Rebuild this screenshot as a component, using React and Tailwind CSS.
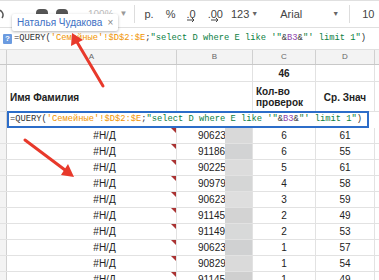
const rows = [
  ["90623", "6", "61"],
  ["91186", "6", "55"],
  ["90225", "5", "61"],
  ["90979", "4", "58"],
  ["90623", "3", "59"],
  ["91145", "2", "49"],
  ["91149", "2", "53"],
  ["90623", "1", "57"],
  ["90829", "1", "54"],
  ["91145", "1", "49"],
];

const blur = ["#d9d9d9", "#d2d3d4", "#dcdcdc", "#d5d6d6", "#dedede", "#d3d3d3", "#d8d9d9", "#d0d1d2", "#dadada", "#cfcfcf"];

function Formula() {
  return (
    <span className="whitespace-nowrap" style={{ fontFamily: "'Liberation Mono', 'DejaVu Sans Mono', monospace" }}>
      <span className="text-[#333]">=QUERY(</span>
      <span className="text-[#f09300]">'Семейные'!$D$2:$E</span>
      <span className="text-[#333]">;</span>
      <span className="text-[#0b8043]">"select D where E like '"</span>
      <span className="text-[#333]">&amp;</span>
      <span className="text-[#8e44ad]">B3</span>
      <span className="text-[#333]">&amp;</span>
      <span className="text-[#0b8043]">"' limit 1"</span>
      <span className="text-[#333]">)</span>
    </span>
  );
}

function App() {
  return (
    <div className="relative w-[379px] h-[280px] overflow-hidden bg-white" style={{ fontFamily: "'Liberation Sans', Arial, sans-serif" }}>
      {/* toolbar */}
      <div className="h-[28px] flex items-center border-t border-b border-[#e0e0e0] text-[11px] text-[#444] bg-white">
        <svg width="6" height="12" viewBox="0 0 6 12" className="ml-[-2px]"><path d="M0 2 A5 5 0 0 1 4 10" stroke="#555" strokeWidth="1.5" fill="none" /></svg>
        <div className="ml-[32px] w-[12px] h-[10px] bg-[#555] rounded-sm" />
        <div className="ml-[8px] w-[12px] h-[10px] bg-[#555] rounded-sm" />
        <span className="ml-[20px] text-[#bbb] text-[10px]">100%</span>
        <span className="ml-[6px] text-[#999] text-[8px]">▼</span>
        <div className="ml-[6px] w-px h-[18px] bg-[#ddd]" />
        <span className="ml-[10px]">р.</span>
        <span className="ml-[12px]">%</span>
        <span className="ml-[11px] relative">
          .0
          <svg className="absolute left-[1px] top-[12px]" width="8" height="4" viewBox="0 0 8 4"><path d="M0 2 H7 M5 0 L7 2 L5 4" stroke="#444" strokeWidth="1" fill="none" /></svg>
        </span>
        <span className="ml-[12px] relative">
          .00
          <svg className="absolute left-[3px] top-[12px]" width="8" height="4" viewBox="0 0 8 4"><path d="M0 2 H7 M5 0 L7 2 L5 4" stroke="#444" strokeWidth="1" fill="none" /></svg>
        </span>
        <span className="ml-[8px]">123</span>
        <span className="ml-[2px] text-[7px] text-[#666]">▼</span>
        <span className="ml-[22px]">Arial</span>
        <span className="ml-[30px] text-[7px] text-[#666]">▼</span>
        <div className="ml-[10px] w-px h-[18px] bg-[#ddd]" />
        <span className="ml-[12px]">10</span>
      </div>

      {/* formula bar */}
      <div className="h-[22px] flex items-center border-b border-[#e0e0e0] text-[8.75px]">
        <div className="ml-[3px] w-[9px] h-[10px] bg-[#6b9be0] rounded-[1px] text-white text-[8px] font-bold flex items-center justify-center">?</div>
        <div className="ml-[2px]"><Formula /></div>
      </div>

      {/* column headers */}
      <div className="h-[15px] flex bg-[#f3f3f3] border-b border-[#c8c8c8] text-[8px] text-[#666]">
        <div className="w-[7px] border-r border-[#d0d0d0]" />
        <div className="w-[170px] border-r border-[#d0d0d0] flex items-center justify-center">A</div>
        <div className="w-[76px] border-r border-[#d0d0d0] flex items-center justify-center">B</div>
        <div className="w-[63px] border-r border-[#d0d0d0] flex items-center justify-center">C</div>
        <div className="w-[59px] border-r border-[#d0d0d0] flex items-center justify-center">D</div>
        <div className="flex-1" />
      </div>

      <div className="text-[10px] text-[#222]">
        {/* row 1 */}
        <div className="h-[17px] flex border-b border-[#e2e2e2]">
          <div className="w-[7px] bg-[#f3f3f3] border-r border-[#d0d0d0]" />
          <div className="w-[170px] border-r border-[#e2e2e2]" />
          <div className="w-[76px] border-r border-[#e2e2e2]" />
          <div className="w-[63px] border-r border-[#e2e2e2] flex items-center justify-center font-bold">46</div>
          <div className="w-[59px] border-r border-[#e2e2e2]" />
        </div>
        {/* row 2 */}
        <div className="h-[30px] flex border-b border-[#e2e2e2] font-bold">
          <div className="w-[7px] bg-[#f3f3f3] border-r border-[#d0d0d0]" />
          <div className="w-[170px] border-r border-[#e2e2e2] flex items-center pl-[3px] pt-[2px]">Имя Фамилия</div>
          <div className="w-[76px] border-r border-[#e2e2e2]" />
          <div className="w-[63px] border-r border-[#e2e2e2] flex items-center pl-[3px] leading-[11px]">Кол-во<br />проверок</div>
          <div className="w-[59px] border-r border-[#e2e2e2] flex items-center justify-center pt-[2px]">Ср. Знач</div>
        </div>
        {/* row 3 with editor */}
        <div className="h-[16px] flex">
          <div className="w-[7px] bg-[#f3f3f3] border-r border-[#d0d0d0]" />
          <div className="w-[362px] h-[17px] mt-[-1px] border-2 border-[#2c6dc9] bg-white flex items-center pl-[1px] text-[8.75px] overflow-hidden">
            <Formula />
          </div>
        </div>
        {rows.map((r, i) => (
          <div key={i} className="h-[16px] flex border-b border-[#e2e2e2]">
            <div className="w-[7px] bg-[#f3f3f3] border-r border-[#d0d0d0]" />
            <div className="relative w-[170px] border-r border-[#e2e2e2] flex items-center justify-center pl-[26px]">
              #Н/Д
              <div className="absolute right-0 top-0 w-0 h-0 border-t-[5px] border-l-[5px] border-t-[#a33] border-l-transparent" />
            </div>
            <div className="w-[76px] border-r border-[#e2e2e2] flex items-center pl-[21px] overflow-hidden">
              <span className="w-[27px] overflow-hidden">{r[0]}</span>
              <div className="w-[28px] h-full" style={{ backgroundColor: blur[i] }} />
            </div>
            <div className="w-[63px] border-r border-[#e2e2e2] flex items-center justify-center">{r[1]}</div>
            <div className="w-[59px] border-r border-[#e2e2e2] flex items-center justify-center">{r[2]}</div>
          </div>
        ))}
      </div>

      {/* collaborator tooltip */}
      <div className="absolute left-[12px] top-[14px] h-[17px] px-[5px] bg-white shadow-[0_1px_3px_rgba(0,0,0,0.3)] rounded-[2px] flex items-center gap-[5px] text-[10px] text-[#3c6fc4] whitespace-nowrap">
        Наталья Чудакова
        <span className="text-[#888] text-[10px]">×</span>
      </div>

      {/* arrows */}
      <svg className="absolute inset-0 pointer-events-none" width="379" height="280">
        <line x1="103" y1="86" x2="77" y2="42" stroke="#e8392b" strokeWidth="3" strokeLinecap="round" />
        <polygon points="72,33 71,46 83,40" fill="#e8392b" />
        <line x1="25" y1="140" x2="65" y2="170" stroke="#e8392b" strokeWidth="3" strokeLinecap="round" />
        <polygon points="74,177 61,175 68,164" fill="#e8392b" />
      </svg>
    </div>
  );
}

export default App;
